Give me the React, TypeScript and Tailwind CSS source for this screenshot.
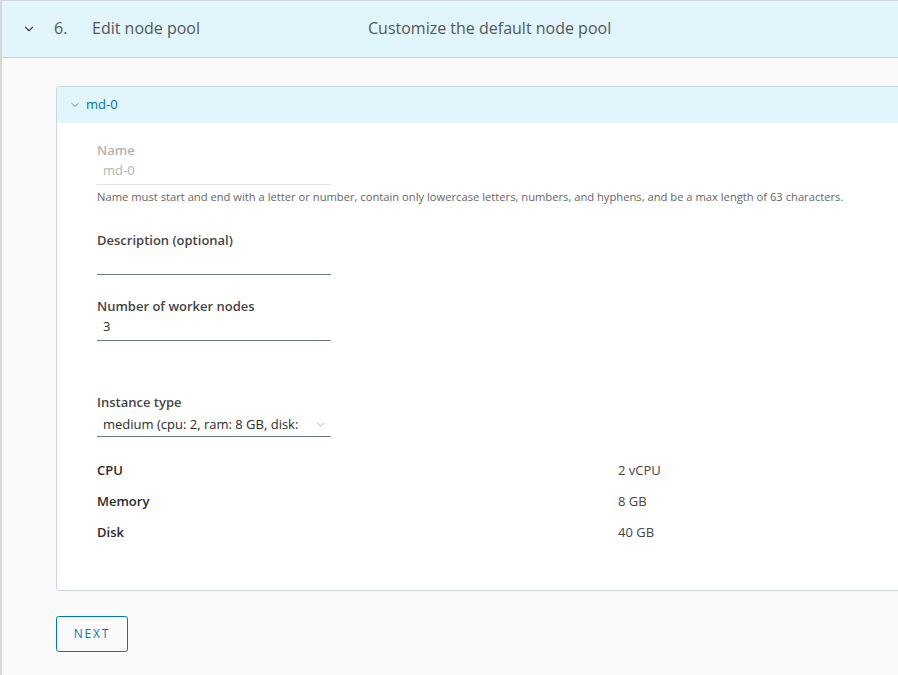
import { ChevronDown } from "lucide-react";

function Field({ label, value, disabled, select }: { label: string; value?: string; disabled?: boolean; select?: boolean }) {
  return (
    <div className="w-[234px]">
      <div className={`text-[13px] font-semibold leading-[16px] ${disabled ? "text-[#b3b3b3]" : "text-[#454545]"}`}>{label}</div>
      <div
        className={`flex h-[27px] items-center justify-between border-b pl-[6px] pr-[4px] text-[13px] ${
          disabled ? "border-[#dde4ea] text-[#b3b3b3]" : "border-[#6a7985] text-[#2b2b2b]"
        } ${select ? "pt-[3px]" : ""}`}
      >
        <span className="whitespace-nowrap">{value}</span>
        {select && <ChevronDown className="h-[13px] w-[13px] shrink-0 text-[#9a9a9a]" strokeWidth={1.5} />}
      </div>
    </div>
  );
}

export default function App() {
  return (
    <div className="h-[675px] w-[898px] overflow-hidden bg-[#fafafa] text-[#454545]" style={{ fontFamily: "'Open Sans', sans-serif" }}>
      <div className="h-full border-l-2 border-[#d7d7d7]">
        {/* -------------------- step header -------------------- */}
        <div className="flex h-[58px] items-center border-y border-[#ccd6de] bg-[#e1f5fd] pb-[3px] text-[16px] text-[#565656]">
          <ChevronDown className="ml-[20px] mt-[3px] h-[14px] w-[14px] text-[#444]" strokeWidth={2} />
          <span className="ml-[18px] w-[38px]">6.</span>
          <span className="w-[276px]">Edit node pool</span>
          <span>Customize the default node pool</span>
        </div>

        {/* -------------------- node pool card -------------------- */}
        <div className="pl-[54px] pt-[28px]">
          <div className="w-[900px] rounded-[3px] border border-[#ccd6de] bg-white">
            <div className="flex h-[36px] items-center bg-[#e1f5fd] pl-[12px] text-[13px] text-[#0072a3]">
              <ChevronDown className="h-[12px] w-[12px] text-[#555]" strokeWidth={1.5} />
              <span className="ml-[5px]">md-0</span>
            </div>
            <div className="pb-[49px] pl-[40px] pt-[19px]">
              <Field label="Name" value="md-0" disabled />
              <p className="mt-[4px] text-[11.2px] leading-[15px] text-[#666]">
                Name must start and end with a letter or number, contain only lowercase letters, numbers, and hyphens, and be a max length of 63 characters.
              </p>
              <div className="mt-[28px]">
                <Field label="Description (optional)" />
              </div>
              <div className="mt-[23px]">
                <Field label="Number of worker nodes" value="3" />
              </div>
              <div className="mt-[53px]">
                <Field label="Instance type" value="medium (cpu: 2, ram: 8 GB, disk:" select />
              </div>
              <div className="mt-[24px] grid grid-cols-[521px_1fr] gap-y-[13px] text-[13px] leading-[18px]">
                <span className="font-semibold text-[#2b2b2b]">CPU</span>
                <span className="text-[#454545]">2 vCPU</span>
                <span className="font-semibold text-[#2b2b2b]">Memory</span>
                <span className="text-[#454545]">8 GB</span>
                <span className="font-semibold text-[#2b2b2b]">Disk</span>
                <span className="text-[#454545]">40 GB</span>
              </div>
            </div>
          </div>

          <button className="mt-[25px] h-[36px] w-[72px] rounded-[3px] border border-[#0079b8] text-[12px] tracking-[0.15em] text-[#0079b8]">
            NEXT
          </button>
        </div>
      </div>
    </div>
  );
}
